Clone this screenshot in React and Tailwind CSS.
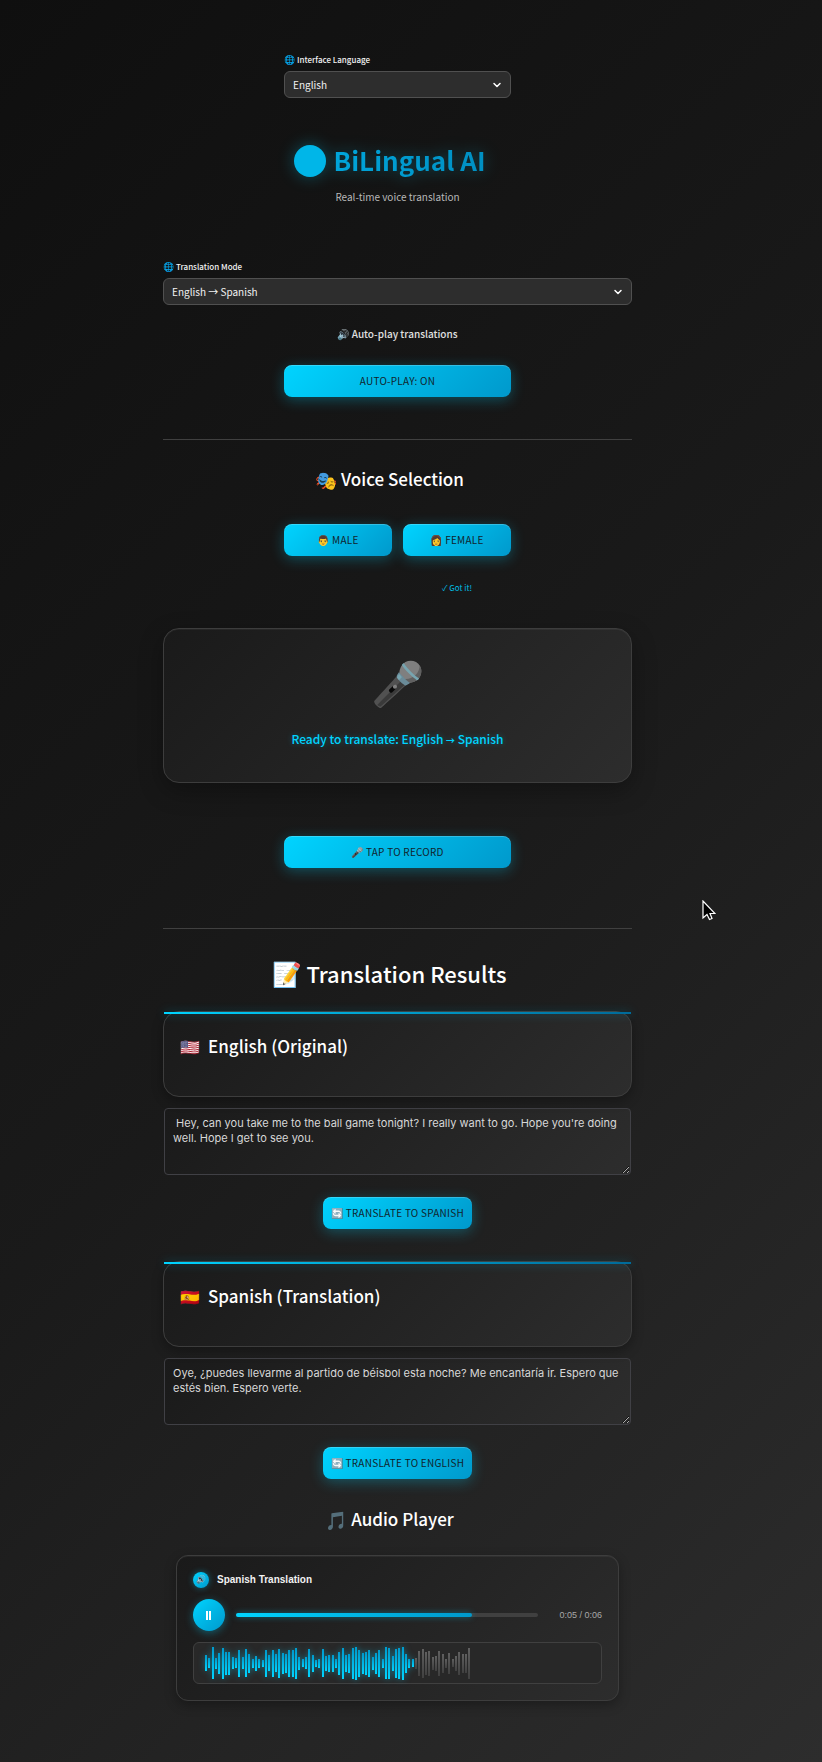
import { useState } from "react";
import { ChevronDown } from "lucide-react";

const SANS = "font-['Noto_Sans_CJK_SC','Noto_Sans',sans-serif]";

const WAVE = [
  16, 10, 32, 11, 21, 31, 23, 23, 12, 10, 27, 12, 28, 19, 9, 15, 9, 7, 27, 16,
  27, 18, 29, 21, 19, 27, 27, 31, 13, 8, 12, 28, 17, 7, 9, 28, 15, 17, 17, 9,
  23, 31, 17, 19, 31, 33, 27, 21, 23, 27, 13, 21, 27, 9, 32, 31, 15, 29, 31, 33,
  19, 9, 8, 11, 25, 29, 23, 25, 13, 15, 25, 19, 9, 21, 8, 15, 23, 19, 19, 31,
];
const PLAYED = 63;

function GlowButton({ children, className = "", ...rest }) {
  return (
    <button
      type="button"
      className={`h-8 rounded-lg bg-linear-135 from-[#00d4ff] to-[#0099cc] text-[10px] leading-4 tracking-wide text-[#12242c] uppercase shadow-[0_3px_14px_rgba(0,212,255,0.3),inset_0_1px_0_rgba(255,255,255,0.2)] ${className}`}
      {...rest}
    >
      {children}
    </button>
  );
}

function Field({ id, label, options, className = "" }) {
  return (
    <div className={className}>
      <label htmlFor={id} className="flex items-center gap-0.5 text-[8px] leading-4 font-medium text-[#f2f2f2]">
        <span className="text-[9px]">🌐</span>
        {label}
      </label>
      <div className="relative mt-[3px]">
        <select
          id={id}
          className="block h-[27px] w-full appearance-none rounded-md border border-[#505050] bg-[#2d2d2d] px-2 text-[10px] leading-4 text-[#f2f2f2]"
        >
          {options.map((o) => (
            <option key={o}>{o}</option>
          ))}
        </select>
        <ChevronDown
          className="pointer-events-none absolute top-2 right-2 size-3 text-white"
          strokeWidth={3}
        />
      </div>
    </div>
  );
}

function SectionTitle({ icon, children, className = "" }) {
  return (
    <h2 className={`flex items-center justify-center gap-1 pr-4 text-[17px] leading-7 font-medium text-white ${className}`}>
      <span className="text-[18px]">{icon}</span>
      {children}
    </h2>
  );
}

function ResultCard({ id, flag, title, value, action }) {
  const [text, setText] = useState(value);
  return (
    <section>
      <div className="relative h-[86px] rounded-2xl border border-[#3d3d3d] bg-linear-135 from-[#1a1a1a] to-[#2d2d2d] px-4 pt-5 shadow-[0_4px_12px_rgba(0,0,0,0.3)]">
        <div className="absolute inset-x-0 top-0 h-0.5 bg-linear-90 from-[#00d4ff] to-[#006a99] shadow-[0_0_10px_rgba(0,212,255,0.4)]" />
        <h3 className="flex items-center gap-2 text-[17px] leading-7 font-medium text-white">
          <span className="text-[16px]">{flag}</span>
          <label htmlFor={id}>{title}</label>
        </h3>
      </div>
      <div className="mt-[11px] px-px">
        <textarea
          id={id}
          value={text}
          onChange={(e) => setText(e.target.value)}
          className="block h-[67px] w-full resize-y rounded-sm border border-[#404045] bg-linear-135 from-[#1a1a1a] to-[#2d2d2d] px-2 py-[7px] font-['Inter',sans-serif] text-[11px] leading-[15px] text-[#d8d8d8]"
        />
      </div>
      <div className="mt-[22px] flex justify-center">
        <GlowButton className="px-2">🔄 {action}</GlowButton>
      </div>
    </section>
  );
}

function AudioPlayer() {
  return (
    <div className="mx-[13px] rounded-xl border border-[#3d3d3d] bg-linear-135 from-[#1a1a1a] to-[#2d2d2d] p-4 font-['Liberation_Sans',sans-serif] shadow-[0_4px_12px_rgba(0,0,0,0.3),inset_0_1px_0_rgba(255,255,255,0.05)]">
      <div className="flex items-center gap-2">
        <span className="flex size-4 items-center justify-center rounded-full bg-linear-135 from-[#00d4ff] to-[#0099cc] text-[8px] leading-4 shadow-[0_0_6px_rgba(0,212,255,0.4)]">
          🔊
        </span>
        <span className="text-[10px] leading-4 font-bold text-[#f2f2f2]">Spanish Translation</span>
      </div>
      <div className="mt-[11px] flex items-center">
        <button
          type="button"
          aria-label="Pause"
          className="flex size-8 items-center justify-center rounded-full bg-linear-135 from-[#00d4ff] to-[#0099cc] shadow-[0_2px_8px_rgba(0,212,255,0.35)]"
        >
          <svg viewBox="0 0 6 10" className="h-2.5 w-1.5" fill="#fff">
            <rect x="0" y="1" width="2" height="9" />
            <rect x="3" y="1" width="2" height="9" />
          </svg>
        </button>
        <div className="ml-[11px] h-1 flex-1 rounded-full bg-[#404040]">
          <div className="h-1 w-[78%] rounded-full bg-linear-90 from-[#00d4ff] to-[#0099cc] shadow-[0_0_6px_rgba(0,212,255,0.4)]" />
        </div>
        <span className="w-16 text-right text-[9px] leading-4 text-[#a8a8a8]">0:05 / 0:06</span>
      </div>
      <div className="mt-[11px] flex h-[42px] items-center rounded-md border border-[#404040] bg-[#282828] px-[11px]">
        <svg viewBox="0 0 266 40" className="h-10 w-[266px] overflow-visible" shapeRendering="crispEdges">
          <defs>
            <linearGradient id="on" x1="0" y1="0" x2="0" y2="1">
              <stop offset="0" stopColor="#0099cc" />
              <stop offset="1" stopColor="#00d4ff" />
            </linearGradient>
            <linearGradient id="off" x1="0" y1="0" x2="0" y2="1">
              <stop offset="0" stopColor="#606060" />
              <stop offset="1" stopColor="#404040" />
            </linearGradient>
          </defs>
          <g className="drop-shadow-[0_0_3px_rgba(0,212,255,0.5)]">
            {WAVE.slice(0, PLAYED).map((h, i) => (
              <rect key={i} x={Math.round((i * 10) / 3)} y={Math.round(20 - h / 2)} width="2" height={h} fill="url(#on)" />
            ))}
          </g>
          {WAVE.slice(PLAYED).map((h, i) => (
            <rect key={i} x={Math.round(((i + PLAYED) * 10) / 3)} y={Math.round(20 - h / 2)} width="2" height={h} fill="url(#off)" />
          ))}
        </svg>
      </div>
    </div>
  );
}

export default function App() {
  const [auto, setAuto] = useState(true);
  return (
    <div className={`relative min-h-screen bg-linear-135 from-[#0f0f0f] via-[#1a1a1a] to-[#2d2d2d] pr-[27px] pb-[59px] ${SANS}`}>
      <main className="mx-auto max-w-[469px] pt-[52px]">
        <Field id="ui-language" label="Interface Language" options={["English", "Spanish"]} className="mx-auto w-[227px]" />

        <header className="mt-[39px] text-center">
          <h1 className="flex h-12 items-center justify-center gap-2 pr-4 text-[26px] leading-10 font-bold drop-shadow-[0_0_8px_rgba(0,212,255,0.3)]">
            <span className="size-8 rounded-full bg-[#00b6e8]" />
            <span className="bg-linear-90 from-[#00a5da] to-[#008fc2] bg-clip-text pb-0.5 text-transparent">BiLingual AI</span>
          </h1>
          <p className="mt-1 text-[10px] leading-4 text-[#b8b8b8]">Real-time voice translation</p>
        </header>

        <Field id="mode" label="Translation Mode" options={["English → Spanish", "Spanish → English"]} className="mt-[54px]" />

        <p className="mt-[21px] text-center text-[10px] leading-4 font-medium text-[#e0e0e0]">🔊 Auto-play translations</p>
        <GlowButton className="mx-auto mt-[23px] block w-[227px]" onClick={() => setAuto(!auto)}>
          Auto-play: {auto ? "On" : "Off"}
        </GlowButton>

        <hr className="mt-[42px] border-[#404040]" />

        <SectionTitle icon="🎭" className="mt-[25px]">Voice Selection</SectionTitle>
        <div className="mx-auto mt-[31px] grid w-[227px] grid-cols-2 gap-[11px]">
          <GlowButton>👨 Male</GlowButton>
          <GlowButton>👩 Female</GlowButton>
          <p className="col-start-2 mt-[13px] text-center text-[8px] leading-4 text-[#00bfe6]">✓ Got it!</p>
        </div>

        <section className="mt-8 h-[155px] rounded-2xl border border-[#3d3d3d] bg-linear-135 from-[#1a1a1a] to-[#2d2d2d] pt-5 text-center shadow-[0_8px_24px_rgba(0,0,0,0.3),inset_0_1px_0_rgba(255,255,255,0.05)]">
          <div className="text-[43px] leading-[62px] opacity-75">🎤</div>
          <p className="mt-5 text-[12px] leading-4 font-medium text-[#00d4ff] text-shadow-[0_0_6px_rgba(0,212,255,0.3)]">
            Ready to translate: English <span className="text-[9px] font-bold">→</span> Spanish
          </p>
        </section>

        <GlowButton className="mx-auto mt-[53px] block w-[227px]">🎤 Tap to record</GlowButton>

        <hr className="mt-[60px] border-[#404040]" />

        <h2 className="mt-6 mb-[18px] flex items-center justify-center gap-1 pr-4 text-[22px] leading-10 font-medium text-white">
          <span className="text-[24px]">📝</span>
          Translation Results
        </h2>

        <div className="flex flex-col gap-8">
          <ResultCard
            id="source"
            flag="🇺🇸"
            title="English (Original)"
            value={" Hey, can you take me to the ball game tonight? I really want to go. Hope you're doing well. Hope I get to see you."}
            action="Translate to Spanish"
          />
          <ResultCard
            id="target"
            flag="🇪🇸"
            title="Spanish (Translation)"
            value="Oye, ¿puedes llevarme al partido de béisbol esta noche? Me encantaría ir. Espero que estés bien. Espero verte."
            action="Translate to English"
          />
        </div>

        <SectionTitle icon="🎵" className="mt-[26px] mb-[22px]">Audio Player</SectionTitle>
        <AudioPlayer />
      </main>

      <svg viewBox="0 0 14 21" className="absolute top-[900px] left-[702px] h-[21px] w-3.5" fill="#000" stroke="#fff" strokeWidth="1.2">
        <path d="M1 1v17l4-3.5 2.5 5 2.5-1-2-5H13z" />
      </svg>
    </div>
  );
}
